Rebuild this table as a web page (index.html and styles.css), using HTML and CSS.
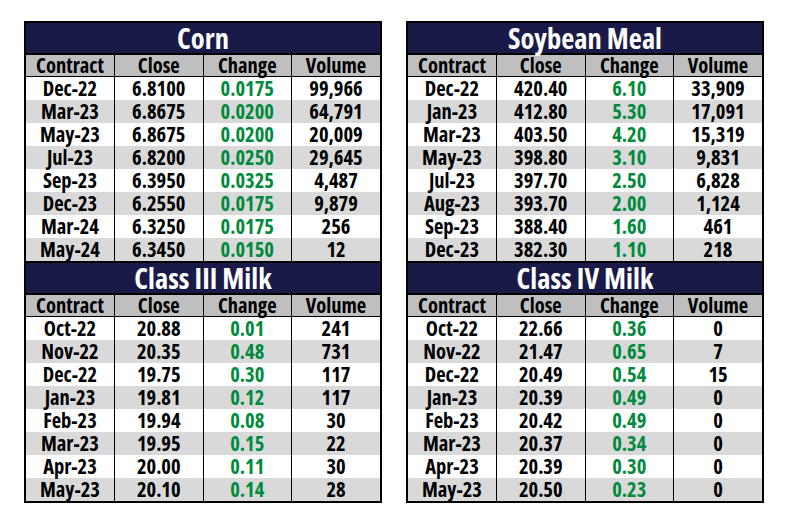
FILE: index.html
```html
<!DOCTYPE html>
<html>
<head>
<meta charset="utf-8">
<link rel="stylesheet" href="styles.css">
</head>
<body>
<div class="page">
  <div class="col">
    <section class="panel">
      <h2 class="title">Corn</h2>
      <table class="quotes">
        <thead><tr><th>Contract</th><th>Close</th><th>Change</th><th>Volume</th></tr></thead>
        <tbody>
          <tr><td>Dec-22</td><td>6.8100</td><td class="up">0.0175</td><td>99,966</td></tr>
          <tr><td>Mar-23</td><td>6.8675</td><td class="up">0.0200</td><td>64,791</td></tr>
          <tr><td>May-23</td><td>6.8675</td><td class="up">0.0200</td><td>20,009</td></tr>
          <tr><td>Jul-23</td><td>6.8200</td><td class="up">0.0250</td><td>29,645</td></tr>
          <tr><td>Sep-23</td><td>6.3950</td><td class="up">0.0325</td><td>4,487</td></tr>
          <tr><td>Dec-23</td><td>6.2550</td><td class="up">0.0175</td><td>9,879</td></tr>
          <tr><td>Mar-24</td><td>6.3250</td><td class="up">0.0175</td><td>256</td></tr>
          <tr><td>May-24</td><td>6.3450</td><td class="up">0.0150</td><td>12</td></tr>
        </tbody>
      </table>
    </section>
    <section class="panel">
      <h2 class="title">Class III Milk</h2>
      <table class="quotes">
        <thead><tr><th>Contract</th><th>Close</th><th>Change</th><th>Volume</th></tr></thead>
        <tbody>
          <tr><td>Oct-22</td><td>20.88</td><td class="up">0.01</td><td>241</td></tr>
          <tr><td>Nov-22</td><td>20.35</td><td class="up">0.48</td><td>731</td></tr>
          <tr><td>Dec-22</td><td>19.75</td><td class="up">0.30</td><td>117</td></tr>
          <tr><td>Jan-23</td><td>19.81</td><td class="up">0.12</td><td>117</td></tr>
          <tr><td>Feb-23</td><td>19.94</td><td class="up">0.08</td><td>30</td></tr>
          <tr><td>Mar-23</td><td>19.95</td><td class="up">0.15</td><td>22</td></tr>
          <tr><td>Apr-23</td><td>20.00</td><td class="up">0.11</td><td>30</td></tr>
          <tr><td>May-23</td><td>20.10</td><td class="up">0.14</td><td>28</td></tr>
        </tbody>
      </table>
    </section>
  </div>
  <div class="col">
    <section class="panel">
      <h2 class="title">Soybean Meal</h2>
      <table class="quotes">
        <thead><tr><th>Contract</th><th>Close</th><th>Change</th><th>Volume</th></tr></thead>
        <tbody>
          <tr><td>Dec-22</td><td>420.40</td><td class="up">6.10</td><td>33,909</td></tr>
          <tr><td>Jan-23</td><td>412.80</td><td class="up">5.30</td><td>17,091</td></tr>
          <tr><td>Mar-23</td><td>403.50</td><td class="up">4.20</td><td>15,319</td></tr>
          <tr><td>May-23</td><td>398.80</td><td class="up">3.10</td><td>9,831</td></tr>
          <tr><td>Jul-23</td><td>397.70</td><td class="up">2.50</td><td>6,828</td></tr>
          <tr><td>Aug-23</td><td>393.70</td><td class="up">2.00</td><td>1,124</td></tr>
          <tr><td>Sep-23</td><td>388.40</td><td class="up">1.60</td><td>461</td></tr>
          <tr><td>Dec-23</td><td>382.30</td><td class="up">1.10</td><td>218</td></tr>
        </tbody>
      </table>
    </section>
    <section class="panel">
      <h2 class="title">Class IV Milk</h2>
      <table class="quotes">
        <thead><tr><th>Contract</th><th>Close</th><th>Change</th><th>Volume</th></tr></thead>
        <tbody>
          <tr><td>Oct-22</td><td>22.66</td><td class="up">0.36</td><td>0</td></tr>
          <tr><td>Nov-22</td><td>21.47</td><td class="up">0.65</td><td>7</td></tr>
          <tr><td>Dec-22</td><td>20.49</td><td class="up">0.54</td><td>15</td></tr>
          <tr><td>Jan-23</td><td>20.39</td><td class="up">0.49</td><td>0</td></tr>
          <tr><td>Feb-23</td><td>20.42</td><td class="up">0.49</td><td>0</td></tr>
          <tr><td>Mar-23</td><td>20.37</td><td class="up">0.34</td><td>0</td></tr>
          <tr><td>Apr-23</td><td>20.39</td><td class="up">0.30</td><td>0</td></tr>
          <tr><td>May-23</td><td>20.50</td><td class="up">0.23</td><td>0</td></tr>
        </tbody>
      </table>
    </section>
  </div>
</div>
</body>
</html>
```

FILE: styles.css
```css
html, body {
  margin: 0;
  padding: 0;
  background: #ffffff;
}

body {
  font-family: "Open Sans", "Liberation Sans", sans-serif;
  font-stretch: 75%;
  font-weight: bold;
  color: #000000;
}

.page {
  display: grid;
  grid-template-columns: 358px 358px;
  column-gap: 24px;
  padding: 21px 24px 0 24px;
}

.col {
  display: flex;
  flex-direction: column;
}

.panel {
  border: 2px solid #000000;
}

.panel + .panel {
  border-top: none;
}

.title {
  margin: 0;
  height: 30px;
  line-height: 30px;
  background: #1a1a48;
  color: #ffffff;
  text-align: center;
  font-size: 28.5px;
  font-weight: bold;
  border-bottom: 2px solid #000000;
}

.quotes {
  width: 100%;
  border-collapse: collapse;
  table-layout: fixed;
}

.quotes th,
.quotes td {
  padding: 0;
  text-align: center;
  border-left: 1px solid #000000;
  font-size: 20.5px;
  white-space: nowrap;
}

.quotes th:first-child,
.quotes td:first-child {
  border-left: none;
}

.quotes th {
  height: 21px;
  line-height: 21px;
  background: #bfbfbf;
  border-bottom: 1px solid #000000;
  font-weight: bold;
}

.quotes td {
  height: 23px;
  line-height: 23px;
  background: #ffffff;
}

.quotes tbody tr:nth-child(even) td {
  background: #d9d9d9;
}

.quotes td.up {
  color: #008a3e;
}
```
